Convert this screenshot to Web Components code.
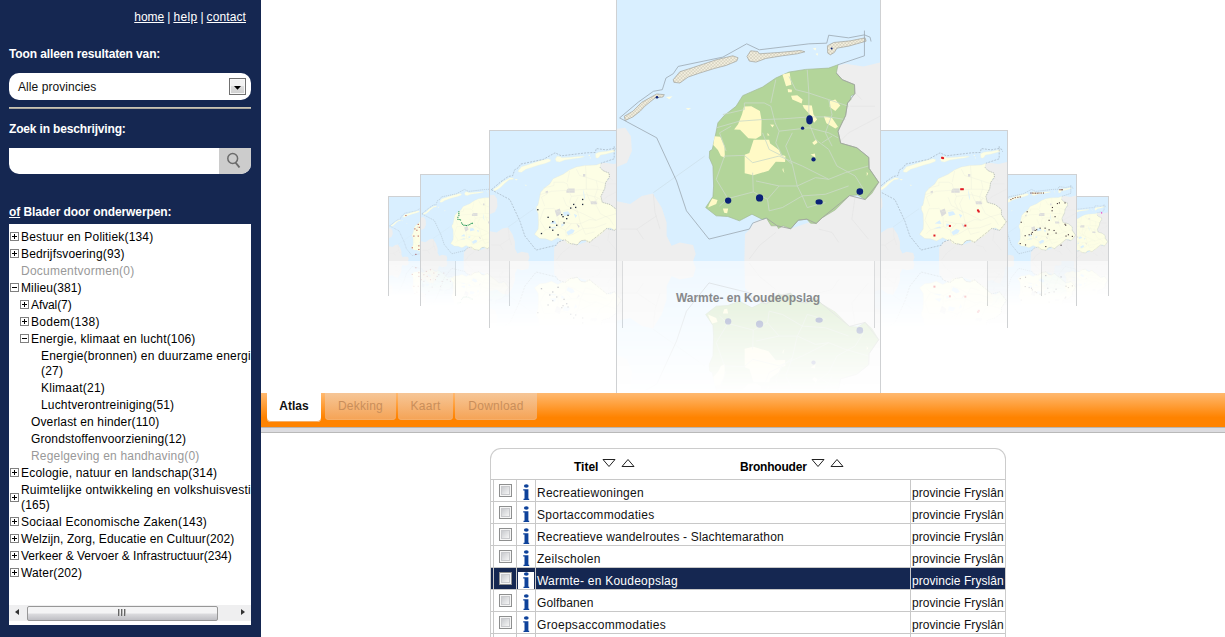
<!DOCTYPE html>
<html lang="nl">
<head>
<meta charset="utf-8">
<title>Atlas</title>
<style>
html,body{margin:0;height:100%;overflow:hidden;background:#fff}
body{font:12px/15px "Liberation Sans",Arial,sans-serif;color:#000}
</style>
</head>
<body>
<atlas-page></atlas-page>
<script>
const define = (name, html, setup) => {
  const t = document.createElement('template');
  t.innerHTML = html;
  customElements.define(name, class extends HTMLElement {
    connectedCallback() {
      if (this.shadowRoot) return;
      const r = this.attachShadow({mode: 'open'});
      r.append(t.content.cloneNode(true));
      if (setup) setup(this, r);
    }
  });
};

/* ---------- map drawing ---------- */
const FRYSLAN = 'M668 195L640 205L570 209L520 217L480 235L440 262L380 288L360 320L325 347L305 370L297 410L288 450L280 455L279 475L290 500L292 560L290 592L268 625L300 650L335 652L370 665L408 645L440 661L452 657L466 680L484 680L488 688L502 680L525 689L548 663L574 660L585 672L602 673L620 656L660 632L703 589L728 587L750 601L770 583L791 549L762 507L761 474L725 445L676 431L668 395L691 348L697 310L707 300L706 290L719 282L718 255L681 240L663 220Z';
const EAST = 'M795 188L745 200L690 192L668 197L663 220L681 240L718 255L719 282L697 310L691 348L668 395L676 431L725 445L761 474L762 507L791 549L750 601L703 589L620 656L525 689L452 657L415 668L402 690L387 705L385 786L795 786Z';
const ISLES = ['M22 350L48 335L75 308L120 283L143 285L139 292L115 295L84 320L70 335L48 352L25 363Z',
  'M170 240L190 216L225 205L300 180L350 168L366 174L362 184L330 197L295 206L250 220L215 232L190 250L172 248Z',
  'M393 170L404 153L425 155L430 162L490 158L555 152L568 156L545 162L500 168L450 176L420 187L400 184Z',
  'M637 160L636 138L655 128L705 123L750 114L753 124L700 139L665 145L657 158L645 165Z'];
const ROADS = 'M300 385L370 365L440 360L500 358L582 352L640 352L690 360M385 310L445 310L465 320L478 370L490 395L480 430L500 470L530 495L545 560L560 590M320 345L385 330L385 310M465 310L480 240M580 352L580 280L575 210M580 280L640 300L700 320M580 370L600 420L640 450L665 500L720 530L745 570M490 395L580 385L640 400L668 415M325 470L385 468L410 490L490 470L560 500L640 540L690 520L760 500M410 520L412 578L335 598L300 540L325 470M412 578L455 600L460 635L500 625L560 590L630 585L700 560M455 600L490 560L545 560L600 535L640 540M345 380L310 400L330 455M440 400L460 450L500 470M530 400L510 440L530 495M640 300L650 345L630 400L650 440M560 590L575 625L630 610M490 560L420 545M620 430L650 410M335 598L310 620M520 230L540 270L580 280';
const BORDER = 'M8 355L65 307L110 275L137 270L148 235L170 222L185 200L320 172L392 132L430 150L580 132L634 130L640 106L700 114L748 105L765 112L768 125M748 92L748 168L668 195M8 355L120 415L180 545L210 635L278 720L400 690L410 672L450 657';
const YELLOW = 'M500 224L522 219L527 255L511 260ZM384 321L406 320L432 334L437 362L436 408L420 418L397 416L372 391L354 390L366 374L378 344ZM413 421L460 421L463 432L490 452L495 465L509 470L508 488L480 487L458 514L412 528L386 522L386 466L400 461ZM295 410L312 412L325 440L326 475L314 470L305 452L291 437ZM526 288L545 287L561 300L558 312L530 300ZM561 316L589 318L594 345L605 360L596 370L588 350L565 325ZM644 304L660 300L675 318L660 334L643 322ZM625 350L650 355L668 382L660 387L633 371ZM288 598L304 602L300 614L275 625L280 612ZM320 628L336 628L333 642L324 641ZM516 268L529 270L528 278L517 278ZM590 430L602 420L606 430L596 437ZM585 465L598 462L600 474ZM502 505L506 522L500 512ZM455 400L461 408L455 408ZM463 375L475 376L470 384ZM755 517L759 523L755 530Z';
const speck = (pts, c, s = 7) => pts.map(p => `<rect x="${p[0]-s/2}" y="${p[1]-s/2}" width="${s}" height="${s}" fill="${c}"/>`).join('');
const P = s => s.split(' ').map(p => p.split(',').map(Number));
const LAYERS = {
  warmte: '<g fill="#0b2277"><ellipse cx="582" cy="361" rx="10" ry="14"/><circle cx="561" cy="386" r="5"/><circle cx="594" cy="480" r="6.500"/><circle cx="336" cy="604" r="9.500"/><ellipse cx="431" cy="596" rx="11" ry="11"/><ellipse cx="611" cy="608" rx="11" ry="8"/><circle cx="734" cy="577" r="10"/><circle cx="121" cy="293" r="4"/><circle cx="649" cy="146" r="3"/></g>',
  left1: speck(P('558,414 558,444 504,444 516,462 486,466 432,506 440,518 462,530 470,510 288,476 350,522 378,548 402,570 360,582 446,556 410,628 310,620 378,600'), '#222b3d', 8),
  left2: speck(P('342,336 342,352 342,368 333,387 333,405 345,407 357,411 366,438 375,450 387,459 399,460 411,462 426,458 441,453 453,443 465,441'), '#28995a', 10),
  left3: speck(P('204,228 352,336 312,392 336,408 364,372 300,480 352,480 280,624 360,600 360,644 324,704 440,380 480,420 520,470 560,560 600,620 640,540 700,560 460,600 500,560 420,540 540,640 580,600 450,660 500,680 660,640 620,480 740,540 420,620 390,560'), '#a23434', 12),
  right1: speck(P('404,162 410,164 519,352 529,352 620,480 625,487 451,574 544,572 358,632'), '#e11c24', 12),
  right2: speck(P('300,432 354,336 645,255 582,297 579,327 627,261 696,255 606,381 552,414 336,555 372,546 393,540 426,507 471,486 516,486 552,501 597,507 615,531 702,459 696,450 705,558 726,546 762,561 291,627 339,639 522,654 660,642 400,525 440,500 540,540'), '#3c2e33', 10) + speck(P('291,201 270,204 246,207 225,215 207,225 30,330 387,165 400,165 415,166 430,166 445,166 460,165 480,165 501,165 650,135 662,135 672,135'), '#642d2d', 9),
  right3: speck(P('718,195'), '#ef22bd', 14)
};
const mapSvg = kind => {
  const main = kind === 'warmte';
  const land = main ? '#b3d59a' : '#fdfee5';
  return `<svg viewBox="0 0 795 786" preserveAspectRatio="none">
  <defs><pattern id="h" width="10" height="10" patternUnits="userSpaceOnUse"><rect width="10" height="10" fill="#f3efdf"/><path d="M0 0L10 10M10 0L0 10" stroke="#b9b6a4" stroke-width="1.200"/></pattern></defs>
  <rect width="795" height="786" fill="#d9efff"/>
  <path d="M0 388L25 385L42 410L45 455L30 490L0 503ZM0 606L40 614L75 590L108 583L135 625L150 670L150 710L165 740L190 730L230 738L238 765L230 786L0 786Z" fill="#eee"/>
  <path d="${EAST}" fill="#eee"/>
  <path d="M110 585L115 640L130 690M10 690L60 690L120 650M60 690L80 720M480 700L430 740L400 780M610 690L650 700L670 730M705 320L780 320M700 260L740 300M720 590L710 660L760 720M670 430L700 400L795 350" fill="none" stroke="#e6e6e6" stroke-width="2.500"/>
  <path d="${FRYSLAN}" fill="${land}" stroke="${main ? '#a3b795' : '#e3e6d6'}" stroke-width="2"/>
  ${main ? `<path d="${YELLOW}" fill="#fffac6"/>` : `<path d="M470 348h40v26h-50v-14zM390 480l30-12 10 30-28 20zM605 425h35l6 18h-38zM335 365l14-4v16h-14zM560 260h14v16h-14zM520 560l20 15-5 12z" fill="#dcdcdc"/><path d="M440 490l30-5 15 20-40 10zM360 560l30-20 10 22zM460 610l30-18 20 8-10 18-30 12zM560 350l8 30 5 40-8-20zM505 500l20 10-10 16zM430 560l20 5-20 16zM350 590l40-12 10 10z" fill="#d9efff"/>`}
  <path d="${ROADS}" fill="none" stroke="${main ? '#cbdac8' : '#ecefdf'}" stroke-width="2.500"/>
  <path d="M110 580L265 470" stroke="#ccdde6" stroke-width="2" fill="none"/>
  ${ISLES.map(d => `<path d="${d}" fill="${main ? 'url(#h)' : '#fdfee5'}" stroke="${main ? '#a09f98' : '#eef2dd'}" stroke-width="2"/>`).join('')}
  <path d="M148 292L168 290L158 299ZM208 325L224 326L215 331ZM592 146L602 144L600 152ZM600 162L608 160L606 168Z" fill="#fffee3"/>
  <path d="M663 220L681 240L718 255L719 282L697 310L691 348L668 395L676 431L725 445L761 474L762 507L791 549L750 601L703 589L620 656L602 673L574 660L548 663L525 689L484 680L452 657" fill="none" stroke="#9fa39e" stroke-width="${main ? 2.5 : 4}" ${main ? '' : 'stroke-dasharray="6 6"'}/>
  <path d="${BORDER}" fill="none" stroke="${main ? '#98a4ad' : '#9ba8b4'}" stroke-width="${main ? 2.3 : 3.5}" ${main ? '' : 'stroke-dasharray="12 7"'}/>
  ${LAYERS[kind]}
  </svg>`;
};

define('map-card', `<style>
:host{display:block;position:absolute;left:var(--x);top:var(--y);width:var(--w);z-index:var(--z)}
.pic,.mirror{box-sizing:border-box;border:0 solid #cfd1d3;border-width:0 1px;overflow:hidden}
.pic{height:var(--h);border-top-width:var(--t,1px)}
.mirror{height:var(--r)}
.fade{height:100%;overflow:hidden;-webkit-mask-image:linear-gradient(rgba(0,0,0,.43),transparent);mask-image:linear-gradient(rgba(0,0,0,.43),transparent)}
.flip{transform:scaleY(-1);height:var(--h)}
svg{display:block;width:100%;height:100%}
</style><div class="pic"></div><div class="mirror"><div class="fade"><div class="flip"></div></div></div>`,
(el, r) => {
  const s = mapSvg(el.getAttribute('layer'));
  r.querySelector('.pic').innerHTML = s;
  r.querySelector('.flip').innerHTML = s;
});

define('cover-flow', `<style>
:host{display:block;position:relative;height:393px;overflow:hidden;background:#fff}
.cap{position:absolute;z-index:9;left:355px;width:264px;top:291px;text-align:center;font-weight:bold;color:#888a8c;white-space:nowrap}
</style>
<map-card layer="left3" style="--x:127px;--y:196px;--w:68px;--h:65px;--r:35px;--z:1"></map-card>
<map-card layer="left2" style="--x:159px;--y:174px;--w:90px;--h:87px;--r:45px;--z:2"></map-card>
<map-card layer="left1" style="--x:228px;--y:130px;--w:134px;--h:131px;--r:67px;--z:3"></map-card>
<map-card layer="right3" style="--x:780px;--y:196px;--w:68px;--h:65px;--r:35px;--z:1"></map-card>
<map-card layer="right2" style="--x:726px;--y:174px;--w:90px;--h:87px;--r:45px;--z:2"></map-card>
<map-card layer="right1" style="--x:613px;--y:130px;--w:134px;--h:131px;--r:67px;--z:3"></map-card>
<map-card layer="warmte" style="--x:355px;--y:0px;--w:265px;--h:261px;--r:132px;--z:4;--t:0px"></map-card>
<div class="cap"><slot></slot></div>`);

/* ---------- sidebar ---------- */
define('top-links', `<style>
:host{display:flex;justify-content:flex-end;gap:3px;height:15px;padding:10px 15px 0 0;color:#fff}
a{color:#fff;text-decoration:underline}
a:first-child{letter-spacing:.45px}a:nth-of-type(2){letter-spacing:.35px}a:last-child{letter-spacing:.1px}
</style><a>home</a><span>|</span><a>help</a><span>|</span><a>contact</a>`);

define('province-select', `<style>
:host{display:flex;align-items:center;justify-content:space-between;box-sizing:border-box;height:27px;background:#fff;border-radius:10px;padding:0 5px 0 9px;color:#111;letter-spacing:.06px}
.b{box-sizing:border-box;width:17px;height:17px;border:1px solid #707070;box-shadow:inset 0 0 0 1px #f8f8f8;background:linear-gradient(#f2f2f2 45%,#ddd 50%,#cfcfcf)}
span{padding-top:1px}
svg{display:block}
</style><span><slot></slot></span><div class="b"><svg width="15" height="15"><path d="M4 7h7L7.500 10.700z" fill="#000"/></svg></div>`);

define('search-field', `<style>
:host{display:flex;justify-content:flex-end;height:26px;background:#fff;border-radius:0 0 10px 10px;overflow:hidden}
div{width:32px;background:#ccc}
svg{display:block}
</style><div><svg width="32" height="26" fill="none" stroke="#6b6b6b"><circle cx="13.700" cy="10.500" r="4.900" stroke-width="1.500"/><path d="M16.500 14.500L20.500 19.500" stroke-width="2"/></svg></div>`);

define('tree-node', `<style>
:host{display:flex;align-items:center;gap:2px;padding:1px 0 1px calc(1px + var(--d,0) * 10px);line-height:15px;white-space:nowrap;letter-spacing:var(--ls)}
:host([off]){color:#999}
svg{display:block;flex:none}
span{position:relative;top:1px}
</style><svg width="9" height="9" shape-rendering="crispEdges"></svg><span><slot></slot></span>`,
(el, r) => {
  const s = el.getAttribute('state');
  if (s) r.querySelector('svg').innerHTML = '<rect x=".5" y=".5" width="8" height="8" fill="#fff" stroke="#808080"/><path d="M2 4.500h5' + (s === 'closed' ? 'M4.500 2v5' : '') + '" stroke="#000"/>';
});

define('scroll-strip', `<style>
:host{display:flex;align-items:center;height:16px;background:#efeff0;box-sizing:border-box}
.thumb{margin:0 auto 0 0;width:191px;height:15px;box-sizing:border-box;border:1px solid #979797;border-radius:2px;background:linear-gradient(#f4f4f5 48%,#dcdcdf 52%,#bfbfc4);display:flex;justify-content:center;align-items:center;gap:1px}
.thumb i{width:2px;height:7px;background:linear-gradient(90deg,#666 50%,#bbb 50%);position:relative;top:-1px;left:-1px}
svg{width:18px;height:16px;flex:none}
</style><svg><path d="M10 4v6L6 7z" fill="#333"/></svg><div class="thumb"><i></i><i></i><i></i></div><svg><path d="M8 4v6l4-3z" fill="#333"/></svg>`);

define('topic-tree', `<style>
:host{display:flex;flex-direction:column;box-sizing:border-box;height:401px;background:#fff;padding:4px 0 4px;overflow:hidden;color:#000}
.l{flex:1}
</style><div class="l"><slot></slot></div><scroll-strip></scroll-strip>`);

define('side-bar', `<style>
:host{display:block;box-sizing:border-box;width:261px;height:637px;background:#152751}
main{padding:0 10px 0 9px}
h2{margin:0;font-size:12px;line-height:15px;color:#fff;font-weight:bold;letter-spacing:-.12px}
.line{border-top:1px solid #cbc5b4;background:#aaa79f;margin:7px 0 13px;height:1px}
h2.a{padding:22px 0 11px}h2.b{padding-bottom:11px;letter-spacing:-.16px}h2.c{padding:31px 0 4px;letter-spacing:-.08px}
u{text-decoration:underline}
</style><top-links></top-links><main>
<h2 class="a">Toon alleen resultaten van:</h2><province-select>Alle provincies</province-select>
<div class="line"></div>
<h2 class="b">Zoek in beschrijving:</h2><search-field></search-field>
<h2 class="c"><u>of</u> Blader door onderwerpen:</h2>
<topic-tree></topic-tree></main>`,
(el, r) => {
  /* depth, state, label, tracking, empty topic */
  const items = [[0,'closed','Bestuur en Politiek(134)',.18],[0,'closed','Bedrijfsvoering(93)',.16],[0,'','Documentvormen(0)',.24,1],[0,'open','Milieu(381)',.12],
  [1,'closed','Afval(7)',-.1],[1,'closed','Bodem(138)',.26],[1,'open','Energie, klimaat en lucht(106)',.17],[2,'','Energie(bronnen) en duurzame energi<br>(27)',.18],[2,'','Klimaat(21)',.25],[2,'','Luchtverontreiniging(51)',.16],
  [1,'','Overlast en hinder(110)',.14],[1,'','Grondstoffenvoorziening(12)',.12],[1,'','Regelgeving en handhaving(0)',.18,1],
  [0,'closed','Ecologie, natuur en landschap(314)',.2],[0,'closed','Ruimtelijke ontwikkeling en volkshuisvesti<br>(165)',.2],[0,'closed','Sociaal Economische Zaken(143)',.22],[0,'closed','Welzijn, Zorg, Educatie en Cultuur(202)',.09],[0,'closed','Verkeer &amp; Vervoer &amp; Infrastructuur(234)',0],[0,'closed','Water(202)',.15]];
  r.querySelector('topic-tree').innerHTML = items.map(i => `<tree-node style="--d:${i[0]};--ls:${i[3]}px" state="${i[1]}"${i[4] ? ' off' : ''}>${i[2]}</tree-node>`).join('');
});

/* ---------- tabs ---------- */
define('nav-tab', `<style>
:host{display:block;box-sizing:border-box;height:27px;width:var(--w);border-radius:0 0 4px 4px;background:linear-gradient(#f6c697,#f5a355);color:#c98e5a;text-align:center;line-height:26px;box-shadow:inset 0 -1px 0 #f5ae68;letter-spacing:.25px}
:host([active]){height:29px;background:#fff;color:#111;font-weight:bold;margin-right:2px;letter-spacing:0}
</style><slot></slot>`);
define('tab-strip', `<style>
:host{display:block}
.o{display:flex;gap:2px;height:34px;padding-left:6px;background:linear-gradient(#ffb970,#ff8300 72%)}
.g{height:4px;background:#dcdce0;border-top:1px solid #bab5b0;border-bottom:1px solid #b9b9b9}
</style><div class="o"><slot></slot></div><div class="g"></div>`);

/* ---------- results ---------- */
const sorter = '<svg class="s" width="34" height="11" fill="none" stroke="#222"><path d="M1 1.500h12L7 8.500zM20 8.500h12L26 1.500z"/></svg>';
define('result-row', `<style>
:host{display:grid;grid-template-columns:2px 22px 18px 374px 94px;gap:0 1px;height:21px;border-bottom:1px solid #c8c8c8;background:#c8c8c8;color:#111;line-height:27px;letter-spacing:var(--ls,0)}
div{background:#fff;overflow:hidden;white-space:nowrap;padding-left:1px}
:host([selected]) div{background:#152751;color:#fff}
.c,.i{padding:0}
.o{letter-spacing:.06px}
svg{display:block}
.q{fill:none}:host([selected]) .q{fill:#fff}
</style><div class="c"></div><div class="c"><svg width="22" height="21"><defs><linearGradient id="g" x2="1" y2="1"><stop offset="0" stop-color="#c6c8cc"/><stop offset="1" stop-color="#f8f8f8"/></linearGradient></defs><rect x="5.500" y="4.500" width="12" height="12" fill="#f6f6f6" stroke="#8e8f8f"/><rect x="7.500" y="6.500" width="8" height="8" fill="url(#g)" stroke="#c9cacd"/></svg></div>
<div class="i"><svg width="18" height="21"><rect class="q" x="1" y="4" width="16" height="17"/><g fill="#0e429a"><ellipse cx="9.300" cy="6" rx="2.400" ry="1.800"/><path d="M6.200 9.300h5.200v9.400h.8v1.200h-5.700v-1.200h1v-8.200h-1.300z"/></g></svg></div>
<div><slot></slot></div><div class="o"></div>`,
(el, r) => { if (el.hasAttribute('source')) r.querySelector('.o').textContent = el.getAttribute('source'); });
define('result-list', `<style>
:host{display:block;box-sizing:border-box;width:516px;margin:15px 0 0 229px;height:189px;border:1px solid #ccc;border-bottom:0;border-radius:11px 11px 0 0;overflow:hidden}
header{display:flex;height:30px;border-bottom:1px solid #c8c8c8;font-weight:bold;line-height:36px}
header div{display:flex;gap:4px;padding-left:83px;width:83px;flex:none}
header div+div{letter-spacing:-.2px}
svg{margin-top:9px;flex:none}
</style><header><div>Titel${sorter}</div><div>Bronhouder${sorter}</div></header><slot></slot>`);

define('atlas-page', `<style>
:host{display:flex;width:1225px;height:637px;overflow:hidden}
section{flex:1;min-width:0}
</style><side-bar></side-bar><section>
<cover-flow>Warmte- en Koudeopslag</cover-flow>
<tab-strip><nav-tab active style="--w:54px">Atlas</nav-tab><nav-tab style="--w:71px">Dekking</nav-tab><nav-tab style="--w:55px">Kaart</nav-tab><nav-tab style="--w:82px">Download</nav-tab></tab-strip>
<result-list></result-list>
</section>`,
(el, r) => {
  const rows = [['Recreatiewoningen',.24],['Sportaccommodaties',.26],['Recreatieve wandelroutes - Slachtemarathon',.16],['Zeilscholen',.27],['Warmte- en Koudeopslag',.24],['Golfbanen',.12],['Groepsaccommodaties',.3]];
  r.querySelector('result-list').innerHTML = rows.map(([t, ls], i) => `<result-row source="provincie Fryslân" style="--ls:${ls}px"${i === 4 ? ' selected' : ''}>${t}</result-row>`).join('') + '<result-row></result-row>';
});
</script>
</body>
</html>
